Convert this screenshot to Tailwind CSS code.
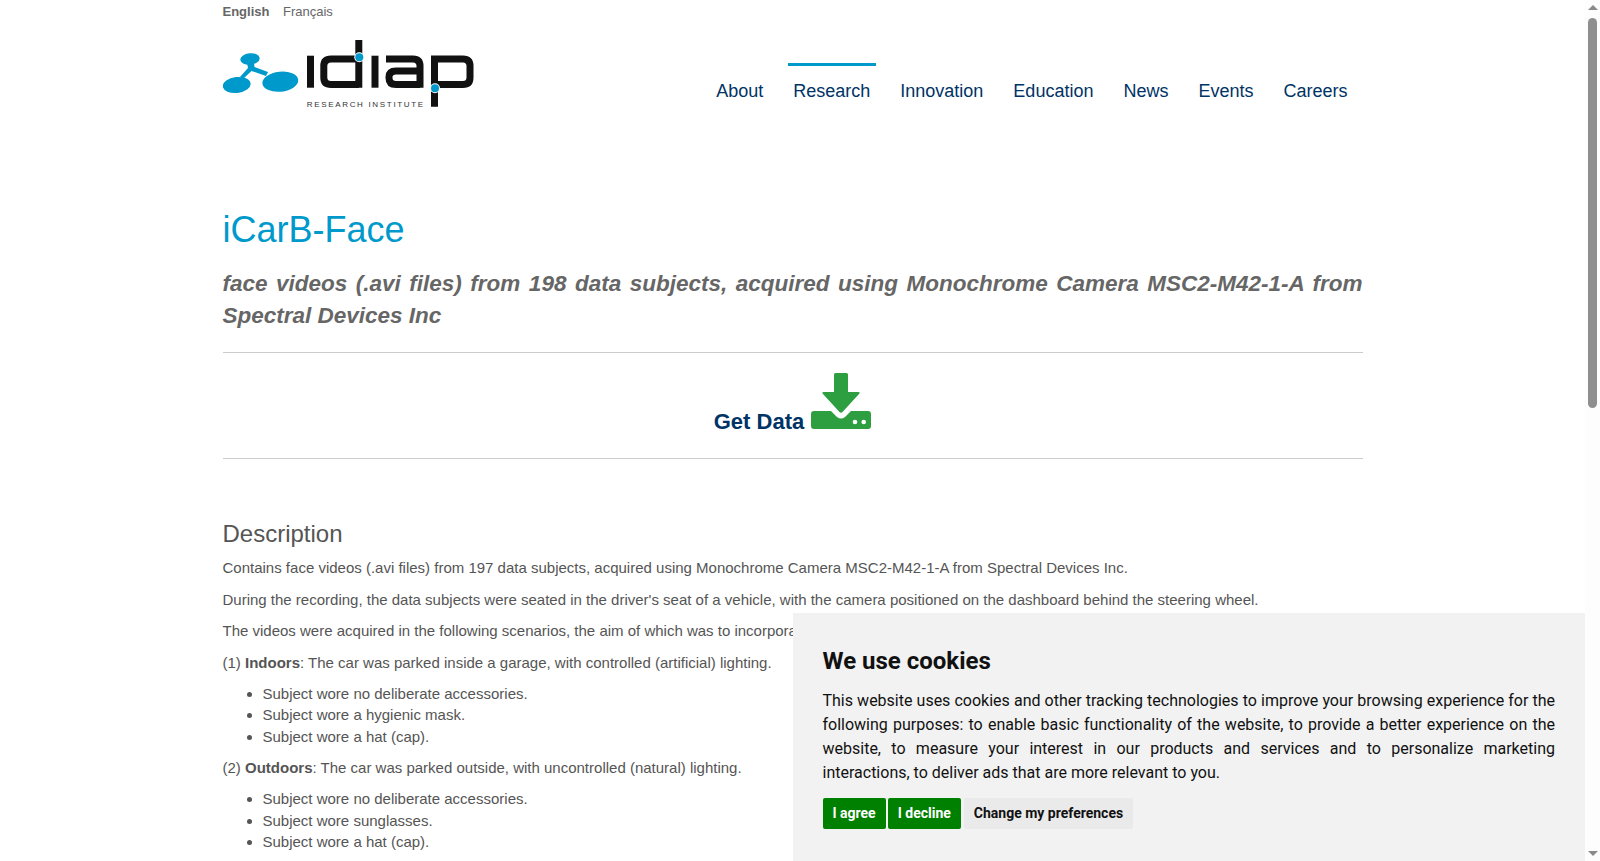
<!DOCTYPE html>
<html lang="en">
<head>
    <meta charset="UTF-8">
    <title>iCarB-Face</title>
    <script src="https://cdn.jsdelivr.net/npm/@tailwindcss/browser@4"></script>
</head>
<body class="h-screen overflow-hidden bg-white font-['Liberation_Sans',Arial,sans-serif] text-[15px] leading-[21.43px] text-[#555]">
    <div class="flex h-[861px]">
        <div class="flex-1 min-w-0 overflow-hidden">
            <div class="mx-auto w-[1140px]">
                <!-- languages -->
                <div class="flex gap-[13.5px] pt-[1px] text-[13px] leading-[21px] text-[#666]">
                    <a class="font-bold">English</a>
                    <a>Français</a>
                </div>

                <!-- header -->
                <header class="flex justify-between h-[97px]">
                    <svg class="mt-[18px]" width="252" height="70" viewBox="223 40 252 70">
                        <g fill="#0099cc">
                            <ellipse cx="250" cy="59" rx="9.700" ry="5.700" transform="rotate(-6 250 59)" />
                            <ellipse cx="236.700" cy="85" rx="14" ry="8" transform="rotate(-6 236.700 85)" />
                            <ellipse cx="280.300" cy="81.700" rx="18" ry="10" transform="rotate(-6 280.300 81.700)" />
                            <path d="M247 63 L254 63 L254.500 67 L268 72 L266 76 L251.500 71 L243 79 L240 77 L248 68 Z" />
                        </g>
                        <g fill="none" stroke="#111" stroke-width="7">
                            <path d="M310.500 55.700 V87.700" />
                            <path d="M358.800 40 V87.700 M358.800 59 H331 Q323.800 59 323.800 66 V77.500 Q323.800 84.500 331 84.500 H358.800" />
                            <path d="M375 55.700 V87.700" />
                            <path d="M386 59 H413 Q420 59 420 66 V87.700 M420 71 H396 Q389 71 389 77 V78 Q389 84.500 396 84.500 H420" />
                            <path d="M434.500 106.700 V59 H463 Q470 59 470 66 V77.500 Q470 84.500 463 84.500 H434.500" />
                        </g>
                        <circle cx="359.300" cy="57.300" r="5" fill="#fff" />
                        <circle cx="359.300" cy="57.300" r="4" fill="#0099cc" />
                        <circle cx="435" cy="88.300" r="5" fill="#fff" />
                        <circle cx="435" cy="88.300" r="4" fill="#0099cc" />
                        <text x="306.700" y="106.700" font-size="8" textLength="116.500" fill="#333">RESEARCH INSTITUTE</text>
                    </svg>

                    <nav class="flex mr-[9.500px] gap-[19px] text-[18px] leading-[24px] text-[#003366] pt-[41px]">
                        <a class="px-[5.500px] pt-[13px] border-t-[3px] border-transparent">About</a>
                        <a class="px-[5.500px] pt-[13px] border-t-[3px] border-[#0099cc]">Research</a>
                        <a class="px-[5.500px] pt-[13px] border-t-[3px] border-transparent">Innovation</a>
                        <a class="px-[5.500px] pt-[13px] border-t-[3px] border-transparent">Education</a>
                        <a class="px-[5.500px] pt-[13px] border-t-[3px] border-transparent">News</a>
                        <a class="px-[5.500px] pt-[13px] border-t-[3px] border-transparent">Events</a>
                        <a class="px-[5.500px] pt-[13px] border-t-[3px] border-transparent">Careers</a>
                    </nav>
                </header>

                <!-- title -->
                <h1 class="mt-[91px] text-[36px] leading-[40px] text-[#0099cc]">iCarB-Face</h1>
                <h2 class="mt-[18px] pb-[20px] border-b border-[#ccc] text-[22.5px] leading-[32px] font-bold italic text-[#666] text-justify">face videos (.avi files) from 198 data subjects, acquired using Monochrome Camera MSC2-M42-1-A from Spectral Devices Inc</h2>

                <div class="flex items-end justify-center h-[106px] pb-[23px] border-b border-[#ccc]">
                    <a class="text-[22px] leading-[26px] font-bold text-[#003366]">Get Data</a>
                    <svg class="ml-[7px] mb-[6px]" width="60" height="56" viewBox="0 0 60 56">
                        <path fill="#2d9f41" d="M23 1.500 Q23 0 24.500 0 H35.500 Q37 0 37 1.500 V19 H47.500 Q49.500 19 48 21 L31.500 39 Q30 40.500 28.500 39 L12 21 Q10.500 19 12.500 19 H23 Z" />
                        <path fill="#2d9f41" d="M3 38 H20 L26 44 Q30 47 34 44 L40 38 H57 Q60 38 60 41 V53 Q60 56 57 56 H3 Q0 56 0 53 V41 Q0 38 3 38 Z" />
                        <circle cx="44" cy="49" r="2.300" fill="#fff" />
                        <circle cx="52.700" cy="49" r="2.300" fill="#fff" />
                    </svg>
                </div>

                <!-- description -->
                <h3 class="mt-[60px] text-[24px] leading-[30px] text-[#555]">Description</h3>
                <p class="mt-[8.300px]">Contains face videos (.avi files) from 197 data subjects, acquired using Monochrome Camera MSC2-M42-1-A from Spectral Devices Inc.</p>
                <p class="mt-[10px]">During the recording, the data subjects were seated in the driver's seat of a vehicle, with the camera positioned on the dashboard behind the steering wheel.</p>
                <p class="mt-[10px]">The videos were acquired in the following scenarios, the aim of which was to incorporate realistic variations in the data.</p>
                <p class="mt-[10px]">(1) <b>Indoors</b>: The car was parked inside a garage, with controlled (artificial) lighting.</p>
                <ul class="mt-[10px] pl-[40px] list-disc">
                    <li>Subject wore no deliberate accessories.</li>
                    <li>Subject wore a hygienic mask.</li>
                    <li>Subject wore a hat (cap).</li>
                </ul>
                <p class="mt-[10px]">(2) <b>Outdoors</b>: The car was parked outside, with uncontrolled (natural) lighting.</p>
                <ul class="mt-[9.600px] pl-[40px] list-disc">
                    <li>Subject wore no deliberate accessories.</li>
                    <li>Subject wore sunglasses.</li>
                    <li>Subject wore a hat (cap).</li>
                </ul>
            </div>
        </div>

        <!-- scrollbar -->
        <div class="relative w-[15px] shrink-0 bg-[#fdfdfd]">
            <div class="absolute left-[3px] top-[5px] w-0 h-0 border-x-[5px] border-x-transparent border-b-[5px] border-b-[#8a8a8a]"></div>
            <div class="absolute left-[3px] top-[18px] h-[390px] w-[9px] rounded-full bg-[#8f8f8f]"></div>
            <div class="absolute left-[3px] bottom-[5px] w-0 h-0 border-x-[5px] border-x-transparent border-t-[5px] border-t-[#8a8a8a]"></div>
        </div>
    </div>

    <!-- cookie banner -->
    <div class="fixed right-[15px] bottom-0 w-[792.500px] h-[248px] bg-[#f2f2f2] pt-[31px] px-[30px] font-['Roboto',sans-serif] text-[#111]">
        <h4 class="text-[24px] leading-[34px] font-bold">We use cookies</h4>
        <p class="mt-[11px] text-[16px] leading-[24px] text-justify">This website uses cookies and other tracking technologies to improve your browsing experience for the following purposes: to enable basic functionality of the website, to provide a better experience on the website, to measure your interest in our products and services and to personalize marketing interactions, to deliver ads that are more relevant to you.</p>
        <div class="flex gap-[2px] mt-[13px] text-[14px] leading-[31px] font-bold">
            <button class="px-[10px] rounded-[2px] bg-[#008000] text-white">I agree</button>
            <button class="px-[10px] rounded-[2px] bg-[#008000] text-white">I decline</button>
            <button class="ml-[1px] px-[10px] rounded-[2px] bg-[#eaeaea] text-[#111]">Change my preferences</button>
        </div>
    </div>
</body>
</html>
